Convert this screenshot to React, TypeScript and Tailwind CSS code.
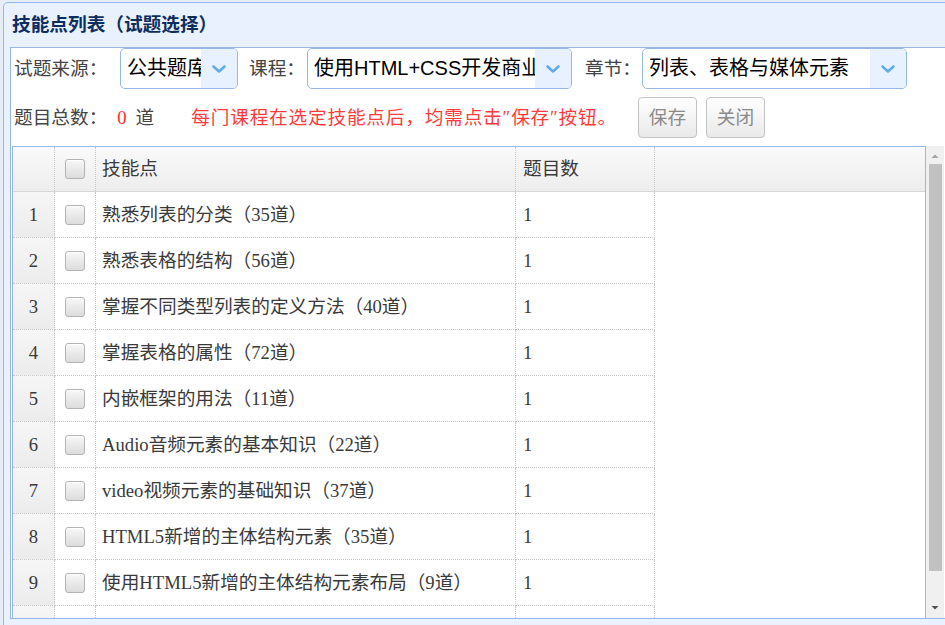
import React from 'react';

const rows = [
  '熟悉列表的分类（35道）',
  '熟悉表格的结构（56道）',
  '掌握不同类型列表的定义方法（40道）',
  '掌握表格的属性（72道）',
  '内嵌框架的用法（11道）',
  'Audio音频元素的基本知识（22道）',
  'video视频元素的基础知识（37道）',
  'HTML5新增的主体结构元素（35道）',
  '使用HTML5新增的主体结构元素布局（9道）',
  'HTML5新增的分组元素（18道）',
];

const song = "font-['Liberation_Serif','Noto_Sans_CJK_SC',serif]";

function Chevron() {
  return (
    <svg width="16" height="16" viewBox="0 0 16 16">
      <path d="M2.5 5.5 L8 10.5 L13.5 5.5" fill="none" stroke="#62abe9" strokeWidth="2.6" strokeLinecap="round" strokeLinejoin="round" />
    </svg>
  );
}

function Combo({ value, width }: { value: string; width: string }) {
  return (
    <div className={`flex h-[41px] shrink-0 overflow-hidden rounded-[5px] border border-[#95b8e7] bg-white ${width}`}>
      <div className="flex-1 overflow-hidden whitespace-nowrap pl-[6px] font-['Liberation_Sans','Noto_Sans_CJK_SC',sans-serif] text-[20px] leading-[39px] text-black">
        {value}
      </div>
      <div className="flex w-[36px] shrink-0 items-center justify-center bg-[#e8f1ff]">
        <Chevron />
      </div>
    </div>
  );
}

function Checkbox() {
  return (
    <span className="block h-[20px] w-[20px] rounded-[3px] border border-[#b3b3b3] bg-linear-to-b from-[#f8f8f8] to-[#dcdcdc] shadow-[inset_0_1px_0_#fff]" />
  );
}

function Button({ label }: { label: string }) {
  return (
    <button className="h-[41px] w-[59px] rounded-[4px] border border-[#c3c3c3] bg-linear-to-b from-white to-[#e9e9e9] text-[18.67px] text-[#8a8a8a]">
      {label}
    </button>
  );
}

export default function App() {
  return (
    <div className={`h-[625px] w-[945px] overflow-hidden bg-[#e6edf6] pl-[3px] pt-[2px] ${song}`}>
      <div className="flex h-[640px] w-[960px] flex-col rounded-tl-[5px] border border-[#95b8e7] bg-[#e9f1ff]">
        {/* title bar */}
        <div className="flex h-[44px] shrink-0 items-center pl-[8px] text-[18.67px] font-bold text-[#0e2d5f]">
          技能点列表（试题选择）
        </div>

        {/* body */}
        <div className="ml-[6px] flex h-[572px] flex-col border border-[#95b8e7] bg-white text-[18.67px] text-[#444]">
          <div className="flex h-[41px] shrink-0 items-center pl-[3px]">
            <span className="w-[106px] shrink-0">试题来源：</span>
            <Combo value="公共题库" width="w-[118px]" />
            <span className="ml-[11px] w-[58px] shrink-0">课程：</span>
            <Combo value="使用HTML+CSS开发商业项目" width="w-[265px]" />
            <span className="ml-[13px] w-[57px] shrink-0">章节：</span>
            <Combo value="列表、表格与媒体元素" width="w-[265px]" />
          </div>

          <div className="flex h-[57px] shrink-0 items-center pl-[3px]">
            <span>题目总数：</span>
            <span className="ml-[10px] text-[#ff2b2b]">0</span>
            <span className="ml-[9px]">道</span>
            <span className="ml-[37px] tracking-[0.8px] text-[#ff3b3b]">每门课程在选定技能点后，均需点击″保存″按钮。</span>
            <div className="ml-[21px] flex gap-[9px]">
              <Button label="保存" />
              <Button label="关闭" />
            </div>
          </div>

          <div className="flex min-h-0 flex-1 pl-[1px]">
            <div className="w-[914px] overflow-hidden border-l border-r border-t border-[#95b8e7] text-[#3a3a3a]">
              <div className="grid h-[45px] grid-cols-[42px_41px_420px_139px_1fr] border-b border-[#d6d6d6] bg-linear-to-b from-[#fafafa] to-[#ededed]">
                <div className="border-r border-dotted border-[#c8c8c8]" />
                <div className="flex items-center justify-center border-r border-dotted border-[#c8c8c8]">
                  <Checkbox />
                </div>
                <div className="flex items-center border-r border-dotted border-[#c8c8c8] pl-[6px]">技能点</div>
                <div className="flex items-center border-r border-dotted border-[#c8c8c8] pl-[7px]">题目数</div>
                <div />
              </div>
              {rows.map((name, i) => (
                <div key={i} className="grid h-[46px] grid-cols-[42px_41px_420px_139px_1fr]">
                  <div className="flex items-center justify-center border-b border-r border-dotted border-[#c8c8c8] bg-linear-to-b from-[#f6f6f6] to-[#ececec]">
                    {i + 1}
                  </div>
                  <div className="flex items-center justify-center border-b border-r border-dotted border-[#c8c8c8]">
                    <Checkbox />
                  </div>
                  <div className="flex items-center overflow-hidden whitespace-nowrap border-b border-r border-dotted border-[#c8c8c8] pl-[6px]">
                    {name}
                  </div>
                  <div className="flex items-center border-b border-r border-dotted border-[#c8c8c8] pl-[7px]">1</div>
                  <div />
                </div>
              ))}
            </div>

            {/* scrollbar */}
            <div className="flex w-[18px] flex-col items-center bg-[#f0f0f0]">
              <svg width="10" height="16" viewBox="0 0 10 16" className="mt-[2px]">
                <path d="M1.5 10 L5 6.5 L8.5 10 Z" fill="#a3a3a3" />
              </svg>
              <div className="h-[407px] w-[13px] bg-[#c1c1c1]" />
              <div className="flex-1" />
              <svg width="10" height="16" viewBox="0 0 10 16" className="mb-[2px]">
                <path d="M1.5 6 L8.5 6 L5 9.5 Z" fill="#505050" />
              </svg>
            </div>
          </div>
        </div>
      </div>
    </div>
  );
}
